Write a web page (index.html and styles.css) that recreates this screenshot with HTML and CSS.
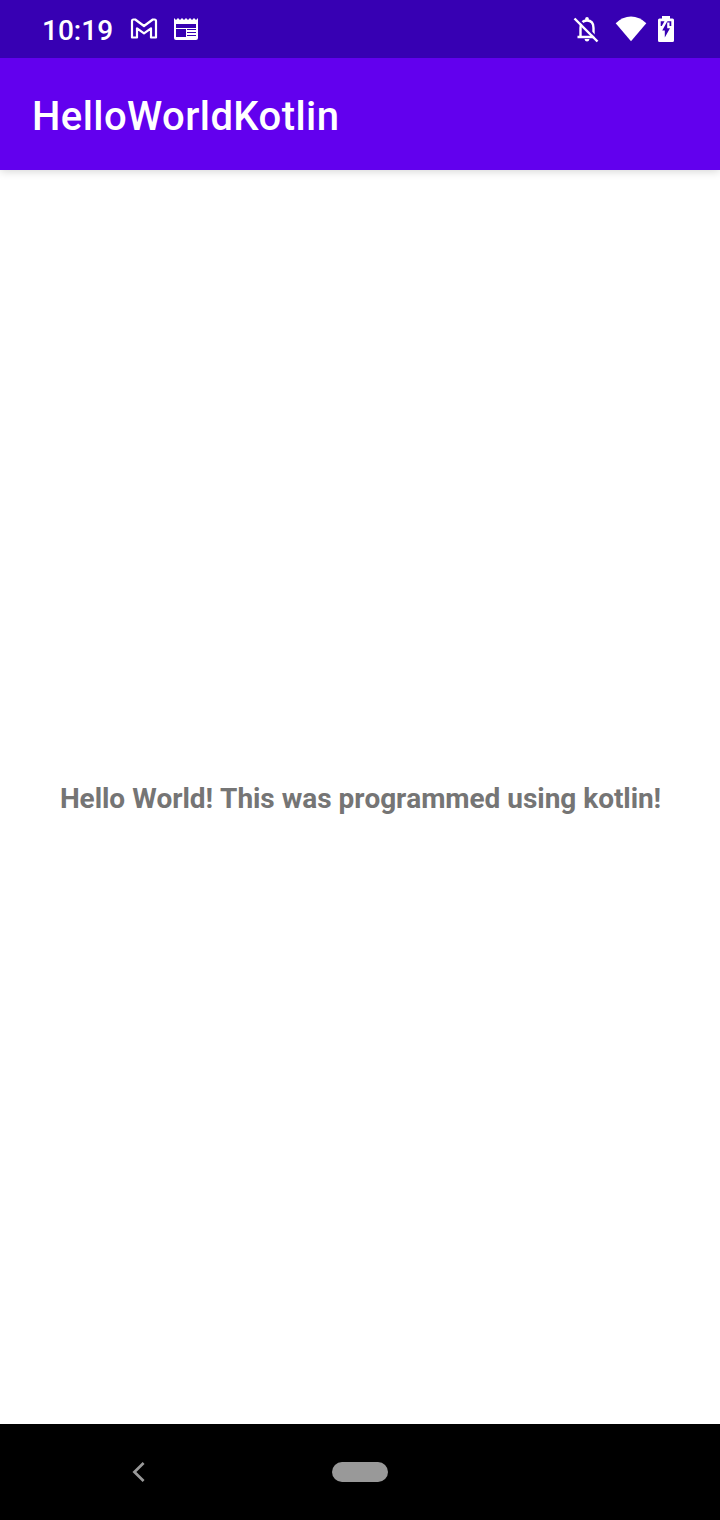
FILE: index.html
```html
<!DOCTYPE html>
<html lang="en">
<head>
<meta charset="utf-8">
<title>HelloWorldKotlin</title>
<link rel="stylesheet" href="styles.css">
</head>
<body>
<div class="screen">
  <div class="status-bar">
    <span class="clock">10:19</span>
    <div class="notifications">
      <svg class="icon" viewBox="0 0 40 40"><path d="M8 27.500V11Q8 9.500 9.500 9.500L11.200 9.500L20 16L28.800 9.500L30.500 9.500Q32 9.500 32 11V27.500H27V18.300L20 23.400L13 18.300V27.500Z" fill="none" stroke="#fff" stroke-width="2.200" stroke-linejoin="round"/></svg>
      <svg class="icon" viewBox="0 0 40 40"><path fill="#fff" fill-rule="evenodd" d="M8 8L10 10L12 8L14 10L16 8L18 10L20 8L22 10L24 8L26 10L28 8L30 10L32 8V28Q32 30 30 30H10Q8 30 8 28ZM10 14V18H30V14ZM10 19V27H20V19ZM21 19V20H30V19ZM21 22V23H30V22ZM21 25V26H30V25Z"/></svg>
    </div>
    <div class="system">
      <svg class="icon" viewBox="0 0 40 40"><path d="M14.500 26V18C14.500 12.500 17 10.500 21 10.500S27.500 13 27.500 18V26M11.500 27H29" fill="none" stroke="#fff" stroke-width="2.400"/><path d="M19.200 10V8.500Q19.200 7 21 7T22.800 8.500V10ZM18.500 29H23.500Q23 31.500 21 31.500T18.500 29Z" fill="#fff"/><path d="M10 7L33 30" stroke="#3700b3" stroke-width="2"/><path d="M8.500 8.500L31.500 31.500" stroke="#fff" stroke-width="2.400"/></svg>
      <svg class="icon" viewBox="0 0 40 40"><path fill="#fff" d="M7.700 13.200Q14.500 6.500 23 6.500T38.300 13.200L23 31.300Z"/></svg>
      <svg class="icon-battery" viewBox="0 0 36 40"><path fill="#fff" d="M14 6H22V8.500H24.500Q26 8.500 26 10V30.500Q26 32 24.500 32H11.500Q10 32 10 30.500V10Q10 8.500 11.500 8.500H14Z"/><path fill="#3700b3" d="M12.700 11.300H16.500L13.800 16H12.700ZM19.500 11.300H23.300V16H21.500V12.500H19ZM19.200 11.500V18.300H22L16.800 27.500V20.500H14.200Z"/></svg>
    </div>
  </div>
  <header class="app-bar"><h1 class="title">HelloWorldKotlin</h1></header>
  <main class="content"><p class="message">Hello World! This was programmed using kotlin!</p></main>
  <nav class="nav-bar">
    <svg class="back" viewBox="0 0 16 22"><path d="M13.600 2L4.400 11L13.600 20" fill="none" stroke="#999" stroke-width="2.700"/></svg>
    <span class="home-pill"></span>
  </nav>
</div>
</body>
</html>
```
FILE: styles.css
```css
body { margin: 0; font-family: Roboto, sans-serif; }
.screen { display: flex; flex-direction: column; height: 1520px; background: #fff; }
.status-bar { box-sizing: border-box; display: flex; align-items: center; height: 58px; padding: 0 36px 0 42px; background: #3700b3; color: #fff; }
.clock { width: 82px; padding-top: 4px; font-size: 28px; font-weight: 500; line-height: 32px; }
.notifications, .system { display: flex; height: 40px; margin-top: 2px; }
.notifications { gap: 2px; }
.system { margin-left: auto; }
.icon { width: 40px; height: 40px; }
.system .icon:first-child { margin-right: 2px; }
.icon-battery { width: 36px; height: 40px; }
.app-bar { display: flex; align-items: center; height: 112px; padding: 0 32px; background: #6200ee; box-shadow: 0 1px 9px rgba(0, 0, 0, .18); clip-path: inset(0 0 -14px 0); z-index: 1; }
.title { margin: 6px 0 0; font-size: 40px; font-weight: 500; line-height: 48px; color: #fff; letter-spacing: .43px; }
.content { flex: 1; display: flex; align-items: center; justify-content: center; }
.message { margin: 0; padding: 4px 0 0 1px; font-size: 28px; font-weight: 700; line-height: 34px; color: #757575; white-space: nowrap; font-kerning: none; letter-spacing: -.07px; word-spacing: .2px; }
.nav-bar { display: flex; align-items: center; height: 96px; padding-left: 130px; background: #000; }
.back { width: 16px; height: 22px; }
.home-pill { width: 56px; height: 20px; margin-left: 186px; border-radius: 10px; background: #999; }
```
